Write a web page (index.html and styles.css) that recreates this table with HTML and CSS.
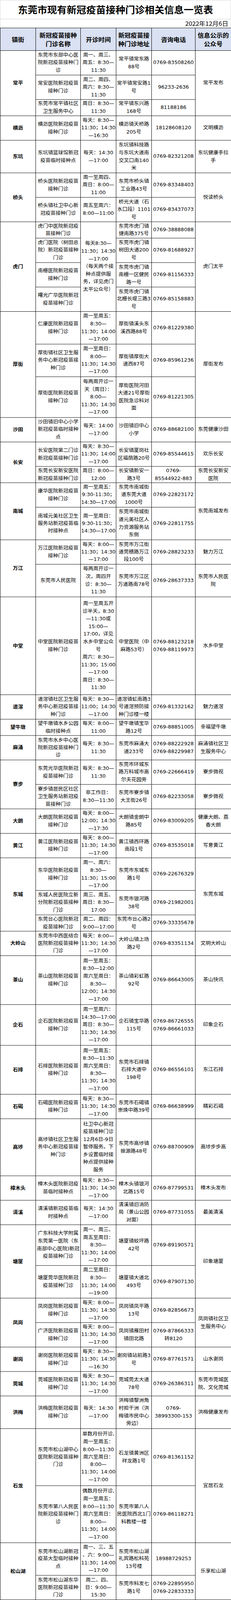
FILE: index.html
```html
<!DOCTYPE html>
<html lang="zh-CN">
<head>
<meta charset="utf-8">
<title>东莞市现有新冠疫苗接种门诊相关信息一览表</title>
<link rel="stylesheet" href="styles.css">
</head>
<body>
<div class="page">
<div class="sheet">
  <div class="title">东莞市现有新冠疫苗接种门诊相关信息一览表</div>
  <div class="date">2022年12月6日</div>
  <table class="grid">
    <colgroup>
      <col class="c-town"><col class="c-name"><col class="c-time"><col class="c-addr"><col class="c-tel"><col class="c-pub">
    </colgroup>
    <thead>
      <tr class="head"><th>镇街</th><th>新冠疫苗接种<br>门诊名称</th><th>开诊时间</th><th>新冠疫苗接<br>种门诊地址</th><th>咨询电话</th><th>信息公示的<br>公众号</th></tr>
    </thead>
    <tbody>
      <tr class="l3"><td class="town" rowspan="3">常平</td><td>东莞市东部中心医<br>院新冠疫苗接种门<br>诊</td><td>周一、周三、<br>周五：8:30—<br>11:30</td><td>常平镇常东路<br>88号</td><td>0769-83508260</td><td rowspan="3">常平发布</td></tr>
      <tr class="l3"><td>常安医院新冠疫苗<br>接种门诊</td><td>周二、周四、<br>周六：8:30—<br>11:30</td><td>常平镇常安路1<br>号</td><td>96233-2636</td></tr>
      <tr class="l2"><td>东莞市常平镇社区<br>卫生服务中心</td><td>周日：8:30—<br>11:30</td><td>常平镇东兴路<br>168号</td><td>81188186</td></tr>

      <tr class="l3"><td class="town">横沥</td><td>横沥医院新冠疫苗<br>接种门诊</td><td>每天：8:30—<br>11:30；14:30<br>—16:30</td><td>横沥镇天桥路<br>205号</td><td>18128608120</td><td>文明横沥</td></tr>

      <tr class="l4"><td class="town">东坑</td><td>东坑镇篮球馆新冠<br>疫苗临时接种点</td><td>每天：14:30<br>—17:00</td><td>东坑镇科技路<br>与东坑大道南<br>交叉口南140<br>米</td><td>0769-82321208</td><td>东坑健康手拉<br>手</td></tr>

      <tr class="l3"><td class="town" rowspan="2">桥头</td><td>桥头医院新冠疫苗<br>接种门诊</td><td>周一至周四、<br>周日：8:00—<br>11:00</td><td>东莞市桥头镇<br>工业路43号</td><td>0769-83348403</td><td rowspan="2">悦读桥头</td></tr>
      <tr class="l3"><td>桥头镇社卫中心新<br>冠疫苗接种门诊</td><td>周五至周六：<br>8:00—11:00</td><td>桥光大道（石<br>水口段）1101<br>号</td><td>0769-83437073</td></tr>

      <tr class="l2"><td class="town" rowspan="4">虎门</td><td>虎门中医院新冠疫<br>苗接种门诊</td><td rowspan="4">每天8:30—<br>11:30；14:30<br>—17:00<br>（每天两个接<br>种点提供服<br>务，详见虎门<br>太平公众号）</td><td>东莞市虎门镇<br>捷南路375号</td><td>0769-38888088</td><td rowspan="4">虎门太平</td></tr>
      <tr class="l3"><td>虎门医院（树田总<br>院）新冠疫苗接种<br>门诊</td><td>东莞市虎门镇<br>树田大道200<br>号</td><td>0769-81688927</td></tr>
      <tr class="l3"><td>南栅医院新冠疫苗<br>接种门诊</td><td>东莞市虎门镇<br>南栅一区健民<br>路一号</td><td>0769-81156333</td></tr>
      <tr class="l3"><td>曙光广华医院新冠<br>疫苗接种门诊</td><td>东莞市虎门镇<br>北栅长堤三路3<br>号</td><td>0769-85158883</td></tr>

      <tr class="l4"><td class="town" rowspan="3">厚街</td><td>仁康医院新冠疫苗<br>接种门诊</td><td>周一至周五：<br>8:30—<br>11:30；14:00<br>—17:00</td><td>厚街镇溪头东<br>溪西路88号</td><td>0769-81229380</td><td rowspan="3">厚街发布</td></tr>
      <tr class="l4"><td>厚街镇社区卫生服<br>务中心新冠疫苗接<br>种门诊</td><td>周一至周日：<br>8:00—<br>11:30；14:30<br>—17:00</td><td>厚街镇厚街大<br>道西87号</td><td>0769-85961236</td></tr>
      <tr class="l5"><td>厚街医院新冠疫苗<br>接种门诊</td><td>每两周开诊一<br>天（周日）：<br>8:00—<br>11:30；14:30<br>—17:00</td><td>厚街医院河田<br>大道21号厚街<br>医院急诊科对<br>面</td><td>0769-81221305</td></tr>

      <tr class="l3"><td class="town">沙田</td><td>沙田镇旧中心小学<br>新冠疫苗临时接种<br>点</td><td>每天：14:00<br>—17:00</td><td>沙田镇旧中心<br>小学</td><td>0769-88682100</td><td>东莞健康沙田</td></tr>

      <tr class="l3"><td class="town" rowspan="2">长安</td><td>长安医院第二门诊<br>新冠疫苗接种门诊</td><td>每天：8:30—<br>11:30；14:00<br>—17:00</td><td>长安镇厦岗社<br>区福荫路20号</td><td>0769-85544615</td><td>欢乐长安</td></tr>
      <tr class="l2"><td>东莞长安新安医院<br>新冠疫苗接种门诊</td><td>周日：8:00—<br>12:00</td><td>长安镇新安一<br>路3号</td><td>0769-<br>85544922-883</td><td>东莞长安新安<br>医院</td></tr>

      <tr class="l3"><td class="town" rowspan="2">南城</td><td>康华医院新冠疫苗<br>接种门诊</td><td>周一至周五：<br>9:30-11:30；<br>14:30—17:00</td><td>东莞市南城街<br>道东莞大道<br>1000号</td><td>0769-22823172</td><td rowspan="2">东莞南城发布</td></tr>
      <tr class="l4"><td>南城元美社区卫生<br>服务站新冠疫苗临<br>时接种点</td><td>周一至周日：<br>9:30-11:30；<br>14:30—17:00</td><td>东莞市南城街<br>道元美社区人<br>力资源服务站<br>东侧</td><td>0769-22811755</td></tr>

      <tr class="l3"><td class="town" rowspan="2">万江</td><td>万江医院新冠疫苗<br>接种门诊</td><td>每天：8:00—<br>11:30；14:30<br>—17:00</td><td>东莞市万江街<br>道莞穗路万江<br>段100号</td><td>0769-28823233</td><td>魅力万江</td></tr>
      <tr class="l4"><td>东莞市人民医院</td><td>每两周开诊一<br>次，周四开<br>诊：8:30—<br>11:30</td><td>东莞市万江区<br>万道路南78号</td><td>0769-28637333</td><td>东莞市人民医<br>院</td></tr>

      <tr class="l12"><td class="town">中堂</td><td>中堂医院新冠疫苗<br>接种门诊</td><td>周一至周五开<br>诊半天，8:30<br>—11:30或<br>15:00—<br>17:00，详见<br>水乡中堂公众<br>号<br>周六：8:30—<br>11:30；15:00<br>—17:00<br>周日：8:30—<br>11:30</td><td>中堂医院（中<br>麻路53号）</td><td>0769-88123218<br>0769-88119973</td><td>水乡中堂</td></tr>

      <tr class="l3"><td class="town">道滘</td><td>道滘镇社区卫生服<br>务中心新冠疫苗接<br>种门诊</td><td>每天：8:30—<br>11:00；14:30<br>—17:00</td><td>道滘镇虹南路3<br>号道滘预防接<br>种门诊楼一楼</td><td>0769-81332162</td><td>魅力道滘</td></tr>

      <tr class="l2"><td class="town">望牛墩</td><td>望牛墩镇水乡公园<br>临时接种点</td><td>每天：8:00—<br>11:00</td><td>望牛墩镇宝华<br>路12号</td><td>0769-88851005</td><td>幸福望牛墩</td></tr>

      <tr class="l3"><td class="town">麻涌</td><td>东莞市水乡中心医<br>院新冠疫苗接种门<br>诊</td><td>每天：8:30—<br>11:30</td><td>东莞市麻涌大<br>道233号</td><td>0769-88222928<br>0769-88229987</td><td>麻涌镇社区卫<br>生服务中心</td></tr>

      <tr class="l3"><td class="town" rowspan="2">寮步</td><td>东莞光华医院新冠<br>疫苗接种门诊</td><td>每天：8:30—<br>11:30</td><td>东莞市环城东<br>路万科城市高<br>尔夫花园旁</td><td>0769-22666419</td><td>寮步微视</td></tr>
      <tr class="l3"><td>寮步镇居民区社区<br>卫生服务站新冠疫<br>苗接种门诊</td><td>非工作日：<br>8:30—11:30</td><td>东莞市寮步镇<br>大王街26号</td><td>0769-82233058</td><td>寮步微视</td></tr>

      <tr class="l3"><td class="town">大朗</td><td>大朗医院新冠疫苗<br>接种门诊</td><td>每天：8:00—<br>12:00；14:30<br>—17:30</td><td>大朗镇金朗中<br>路85号</td><td>0769-83009205</td><td>健康大朗、荔<br>香大朗</td></tr>

      <tr class="l3"><td class="town">黄江</td><td>黄江医院新冠疫苗<br>接种门诊</td><td>每天：8:00—<br>11:30；14:30<br>—17:00</td><td>黄江镇西环路<br>南段1号</td><td>0769-83535018</td><td>写意黄江</td></tr>

      <tr class="l4"><td class="town" rowspan="3">东城</td><td>东华医院新冠疫苗<br>接种门诊</td><td>周一、周六：<br>8:30—<br>11:30；15:00<br>—17:00</td><td>东莞市东城东<br>路1号</td><td>0769-22676329</td><td rowspan="3">东莞东城</td></tr>
      <tr class="l3"><td>东城人民医院立新<br>分院新冠疫苗接种<br>门诊</td><td>周三、周五、<br>周日：8:30—<br>17:00</td><td>东莞市银河路<br>38号</td><td>0769-21982001</td></tr>
      <tr class="l2"><td>东莞台心医院新冠<br>疫苗接种门诊</td><td>周二、周四：<br>9:00—17:00</td><td>东莞市台心路2<br>号</td><td>0769-33335678</td></tr>

      <tr class="l3"><td class="town">大岭山</td><td>东莞市中西医结合<br>医院新冠疫苗接种<br>门诊</td><td>每天：8:00—<br>11:30；14:30<br>—17:00</td><td>大岭山镇上场<br>路2号</td><td>0769-83351134</td><td>文明大岭山</td></tr>

      <tr class="l6"><td class="town">茶山</td><td>茶山医院新冠疫苗<br>接种门诊</td><td>周一至周五：<br>8:30—12:00<br>周六至周日：<br>8:30—<br>12:00；14:30<br>—17:00</td><td>茶山镇彩虹路<br>92号</td><td>0769-86643005</td><td>茶山快讯</td></tr>

      <tr class="l5"><td class="town">企石</td><td>企石医院新冠疫苗<br>接种门诊</td><td>周一至周六：<br>14:30—17:00<br>周日：8:30—<br>11:30；14:30<br>—17:00</td><td>企石镇宝华路<br>115号</td><td>0769-86726555<br>0769-86661033</td><td>印象企石</td></tr>

      <tr class="l6"><td class="town">石排</td><td>石排医院新冠疫苗<br>接种门诊</td><td>周一至周五：<br>8:30—11:30<br>周六至周日：<br>8:30—<br>11:30；14:30<br>—17:00</td><td>东莞市石排镇<br>石排大道中<br>198号</td><td>0769-86556101</td><td>东江石排</td></tr>

      <tr class="l3"><td class="town">石碣</td><td>石碣医院新冠疫苗<br>接种门诊</td><td>每天：8:30—<br>11:30；14:30<br>—17:00</td><td>东莞市石碣镇<br>崇焕中路39号</td><td>0769-86638999</td><td>精彩石碣</td></tr>

      <tr class="l7"><td class="town">高埗</td><td>高埗镇社区卫生服<br>务中心新冠疫苗接<br>种门诊</td><td>社卫中心新冠<br>疫苗接种门诊<br>12月6日-9日<br>暂停服务。下<br>乡设置临时接<br>种点提供接种<br>服务</td><td>东莞市高埗镇<br>振源路48号</td><td>0769-88700909</td><td>高埗步步高</td></tr>

      <tr class="l3"><td class="town">樟木头</td><td>樟木头医院新冠疫<br>苗临时接种点</td><td>每天：8:30—<br>11:30；14:30<br>—17:00</td><td>樟木头镇银河<br>北路15号</td><td>0769-87799531</td><td>樟木头发布</td></tr>

      <tr class="l3"><td class="town">清溪</td><td>清溪镇新冠疫苗临<br>时接种点</td><td>每天：14:30<br>—17:00</td><td>清溪镇旧消防<br>局（景山公园<br>对面）</td><td>0769-87731055</td><td>最美清溪</td></tr>

      <tr class="l5"><td class="town" rowspan="2">塘厦</td><td>广东科技大学附属<br>东莞第一医院（东<br>南部中心医院)新冠<br>疫苗接种门诊</td><td>周一、周三、<br>周五至周日：<br>8:30—<br>11:30；14:00<br>—17:00</td><td>塘厦镇蛟坪路<br>42号</td><td>0769-89190571</td><td rowspan="2">印象塘厦</td></tr>
      <tr class="l4"><td>塘厦莞华医院新冠<br>疫苗接种门诊</td><td>周二至周日：<br>8:30—<br>11:30；14:00<br>—19:00</td><td>塘厦镇大道北<br>493号</td><td>0769-87907130</td></tr>

      <tr class="l3"><td class="town" rowspan="2">凤岗</td><td>凤岗医院新冠疫苗<br>接种门诊</td><td>每天：8:00—<br>11:30；14:30<br>—17:00</td><td>凤岗镇凤平路<br>13号</td><td>0769-82856673</td><td rowspan="2">凤岗镇社区卫<br>生服务中心</td></tr>
      <tr class="l3"><td>广济医院新冠疫苗<br>接种门诊</td><td>每天：8:00—<br>11:30；14:30<br>—17:00</td><td>凤岗镇雁田村<br>镇田北路</td><td>0769-87866333<br>转8120</td></tr>

      <tr class="l3"><td class="town">谢岗</td><td>谢岗医院新冠疫苗<br>接种门诊</td><td>每天：8:30—<br>11:30；14:30<br>—16:30</td><td>谢岗镇站前路3<br>号</td><td>0769-87761571</td><td>山水谢岗</td></tr>

      <tr class="l3"><td class="town">莞城</td><td>莞城医院新冠疫苗<br>接种门诊</td><td>每天：8:30—<br>11:30；14:30<br>—17:00</td><td>莞城莞太大道<br>78号</td><td>0769-26386311</td><td>东莞市莞城医<br>院、文化莞城</td></tr>

      <tr class="l4"><td class="town">洪梅</td><td>洪梅医院新冠疫苗<br>接种门诊</td><td>每天：14:30<br>—17:00</td><td>洪梅镇黎洲角<br>村担干洲（洪<br>梅镇市民中心<br>旁边）</td><td>0769-<br>38993300-153</td><td>洪梅健康发布</td></tr>

      <tr class="l7"><td class="town" rowspan="2">石龙</td><td>东莞市松山湖中心<br>医院新冠疫苗接种<br>门诊</td><td>单数月份开诊,<br>周一至周五：<br>8:00—11:30<br>周六至周日：<br>8:00—<br>11:30；14:00<br>—17:00</td><td>石龙镇黄洲区<br>祥龙路1号</td><td>0769-81361152</td><td rowspan="2">宜居石龙</td></tr>
      <tr class="l7"><td>东莞市第八人民医<br>院新冠疫苗接种门<br>诊</td><td>偶数月份开诊,<br>周一至周五：<br>8:00—11:30<br>周六至周日：<br>8:00—<br>11:30；14:00<br>—17:00</td><td>东莞市第八人<br>民医院西北1门<br>科教楼一楼</td><td>0769-86118271</td></tr>

      <tr class="l4"><td class="town" rowspan="2">松山湖</td><td>东莞市松山湖新冠<br>疫苗大型临时接种<br>点</td><td>周一、三、五<br>、六：9:00—<br>11:30；14:00<br>—17:00</td><td>东莞市松山湖<br>礼宾路松科苑<br>13号楼</td><td>18988729253</td><td rowspan="2">乐享松山湖</td></tr>
      <tr class="l3"><td>东莞市松山湖东华<br>医院新冠疫苗接种<br>门诊</td><td>周二、四、<br>日：9:00—<br>15:30</td><td>东莞市科发七<br>路1号</td><td>0769-22895950<br>0769-22833333</td></tr>
    </tbody>
  </table>
</div>
</div>
</body>
</html>
```

FILE: styles.css
```css
html, body {
  margin: 0;
  padding: 0;
  background: #ffffff;
}

/* the capture window is 4096px tall; the sheet is laid out at its
   natural 4317px height and compressed vertically to fit it */
.page {
  width: 592px;
  height: 4096px;
  overflow: hidden;
}

.sheet {
  width: 592px;
  color: #000000;
  font-family: "DejaVu Sans", "Noto Sans CJK SC", sans-serif;
  transform: scaleY(0.94881);
  transform-origin: 0 0;
}

.title {
  box-sizing: border-box;
  height: 52px;
  border: 1px solid #dadada;
  border-bottom: 1px solid #cfcfcf;
  text-align: center;
  font-family: "Noto Sans CJK SC", sans-serif;
  font-weight: 700;
  font-size: 25px;
  line-height: 49px;
  white-space: nowrap;
}

.date {
  box-sizing: border-box;
  height: 23px;
  border-left: 1px solid #dadada;
  border-right: 1px solid #dadada;
  padding-right: 6px;
  text-align: right;
  font-family: "Noto Sans CJK SC", sans-serif;
  font-size: 16px;
  line-height: 23px;
}

.grid {
  width: 592px;
  border-collapse: collapse;
  table-layout: fixed;
}

.c-town { width: 91px; }
.c-name { width: 115px; }
.c-time { width: 91px; }
.c-addr { width: 91px; }
.c-tel  { width: 112px; }
.c-pub  { width: 92px; }

.grid td,
.grid th {
  border: 1px solid #000000;
  padding: 0;
  text-align: center;
  vertical-align: middle;
  white-space: nowrap;
  overflow: hidden;
  font-size: 13px;
  line-height: 20.6px;
  font-weight: 400;
}

.grid th {
  background: #d9e1f2;
  font-family: "Noto Sans CJK SC", sans-serif;
  font-weight: 700;
  font-size: 16px;
  line-height: 23px;
}

.grid td.town {
  font-family: "Noto Sans CJK SC", sans-serif;
  font-weight: 700;
}

.head { height: 61px; }
.l2 { height: 44px; }
.l3 { height: 66px; }
.l4 { height: 88px; }
.l5 { height: 110px; }
.l6 { height: 132px; }
.l7 { height: 154px; }
.l12 { height: 264px; }
```
